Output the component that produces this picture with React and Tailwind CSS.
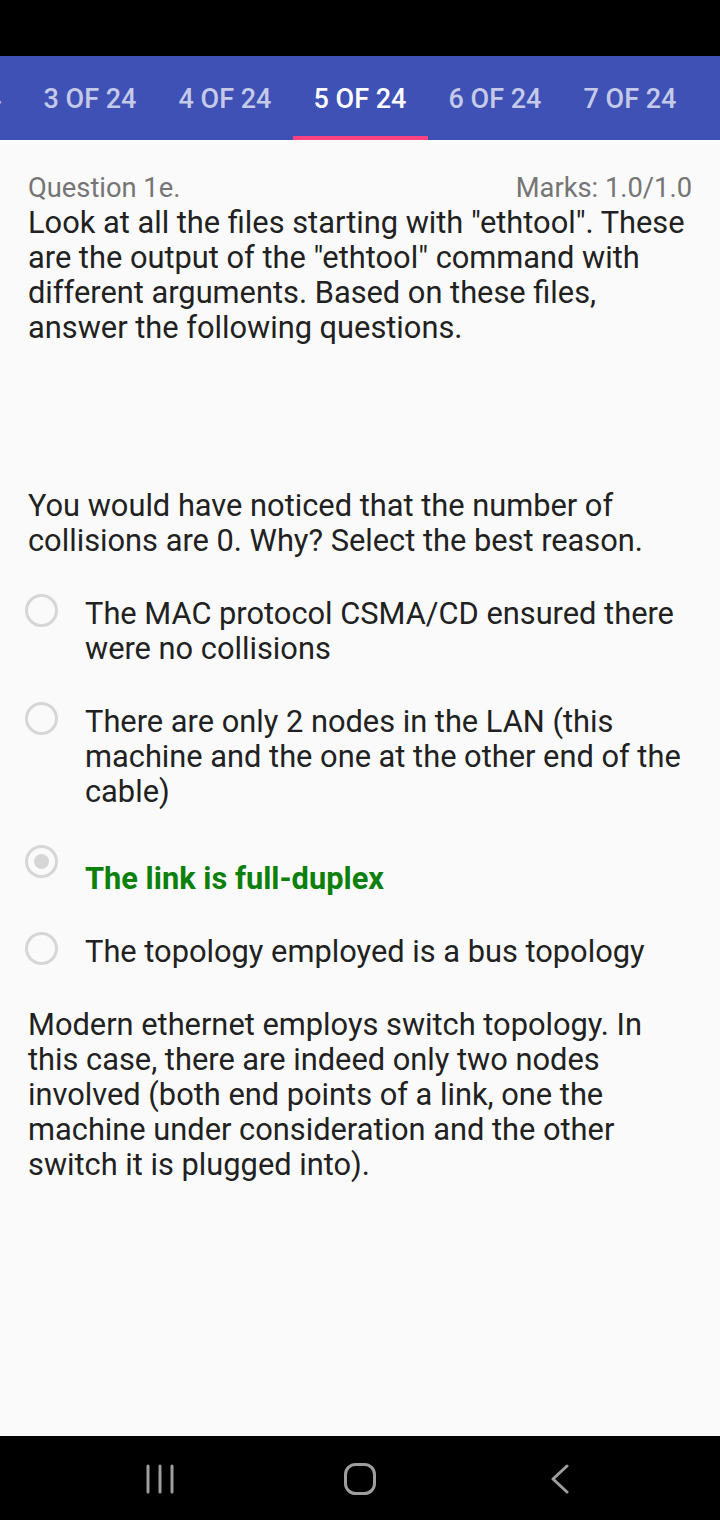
import React from "react";

const tabs = ["2 OF 24", "3 OF 24", "4 OF 24", "5 OF 24", "6 OF 24", "7 OF 24"];

function Radio({ checked }) {
  return (
    <div className="w-[33px] h-[33px] rounded-full border-[3px] border-[#d6d6d6] flex items-center justify-center shrink-0">
      {checked && <div className="w-[15px] h-[15px] rounded-full bg-[#d6d6d6]" />}
    </div>
  );
}

export default function App() {
  return (
    <div
      className="w-[720px] h-[1520px] flex flex-col bg-[#fafafa] overflow-hidden"
      style={{ fontFamily: "Roboto, 'Noto Sans', sans-serif" }}
    >
      <div className="h-[56px] bg-black shrink-0" />
      <div className="h-[84px] bg-[#3f51b5] shrink-0 overflow-hidden relative">
        <div className="flex h-full ml-[-112.5px]">
          {tabs.map((t) => {
            const active = t === "5 OF 24";
            return (
              <div key={t} className="w-[135px] shrink-0 h-full flex items-center justify-center relative">
                <span
                  className={
                    "text-[27px] font-medium whitespace-nowrap pt-[2px] " +
                    (active ? "text-white" : "text-[#c5cae9]")
                  }
                >
                  {t}
                </span>
                {active && <div className="absolute bottom-0 left-0 right-0 h-[4px] bg-[#ff4081]" />}
              </div>
            );
          })}
        </div>
      </div>

      <div className="flex-1 px-[28px] text-[#212121]">
        <div className="pt-[31px] flex justify-between text-[27.3px] leading-[34px] text-[#757575]">
          <span>Question 1e.</span>
          <span>Marks: 1.0/1.0</span>
        </div>
        <p className="text-[30.8px] leading-[35px]">
          Look at all the files starting with "ethtool". These are the output of the "ethtool" command with
          different arguments. Based on these files, answer the following questions.
        </p>
        <p className="text-[30.8px] leading-[35px] mt-[143px]">
          You would have noticed that the number of collisions are 0. Why? Select the best reason.
        </p>

        <div className="flex flex-col">
          <div className="flex items-start mt-[38px]">
            <div className="w-[60px] shrink-0 ml-[-3px] mt-[-2px]">
              <Radio />
            </div>
            <div className="text-[30.8px] leading-[35px]">The MAC protocol CSMA/CD ensured there were no collisions</div>
          </div>
          <div className="flex items-start mt-[38px]">
            <div className="w-[60px] shrink-0 ml-[-3px] mt-[-2px]">
              <Radio />
            </div>
            <div className="text-[30.8px] leading-[35px]">
              There are only 2 nodes in the LAN (this machine and the one at the other end of the cable)
            </div>
          </div>
          <div className="flex items-start mt-[36px]">
            <div className="w-[60px] shrink-0 ml-[-3px]">
              <Radio checked />
            </div>
            <div className="text-[30.8px] leading-[35px] font-bold text-[#0b800b] mt-[16px]">The link is full-duplex</div>
          </div>
          <div className="flex items-start mt-[38px]">
            <div className="w-[60px] shrink-0 ml-[-3px] mt-[-2px]">
              <Radio />
            </div>
            <div className="text-[30.8px] leading-[35px]">The topology employed is a bus topology</div>
          </div>
        </div>

        <p className="text-[30.8px] leading-[35px] mt-[38px]">
          Modern ethernet employs switch topology. In this case, there are indeed only two nodes involved (both end
          points of a link, one the machine under consideration and the other switch it is plugged into).
        </p>
      </div>

      <div className="h-[84px] bg-black shrink-0 flex items-center px-[60px] pt-[2px]">
        <div className="w-[200px] flex justify-center">
          <svg width="30" height="30" viewBox="0 0 30 30">
            <g stroke="#9e9e9e" strokeWidth="3" strokeLinecap="round">
              <line x1="3" y1="2" x2="3" y2="28" />
              <line x1="15" y1="2" x2="15" y2="28" />
              <line x1="27" y1="2" x2="27" y2="28" />
            </g>
          </svg>
        </div>
        <div className="w-[200px] flex justify-center">
          <svg width="32" height="32" viewBox="0 0 32 32">
            <rect x="1.5" y="1.5" width="29" height="29" rx="10" fill="none" stroke="#9e9e9e" strokeWidth="3" />
          </svg>
        </div>
        <div className="w-[200px] flex justify-center">
          <svg width="20" height="30" viewBox="0 0 20 30">
            <polyline points="17,2 3,15 17,28" fill="none" stroke="#9e9e9e" strokeWidth="3" strokeLinecap="round" strokeLinejoin="round" />
          </svg>
        </div>
      </div>
    </div>
  );
}
